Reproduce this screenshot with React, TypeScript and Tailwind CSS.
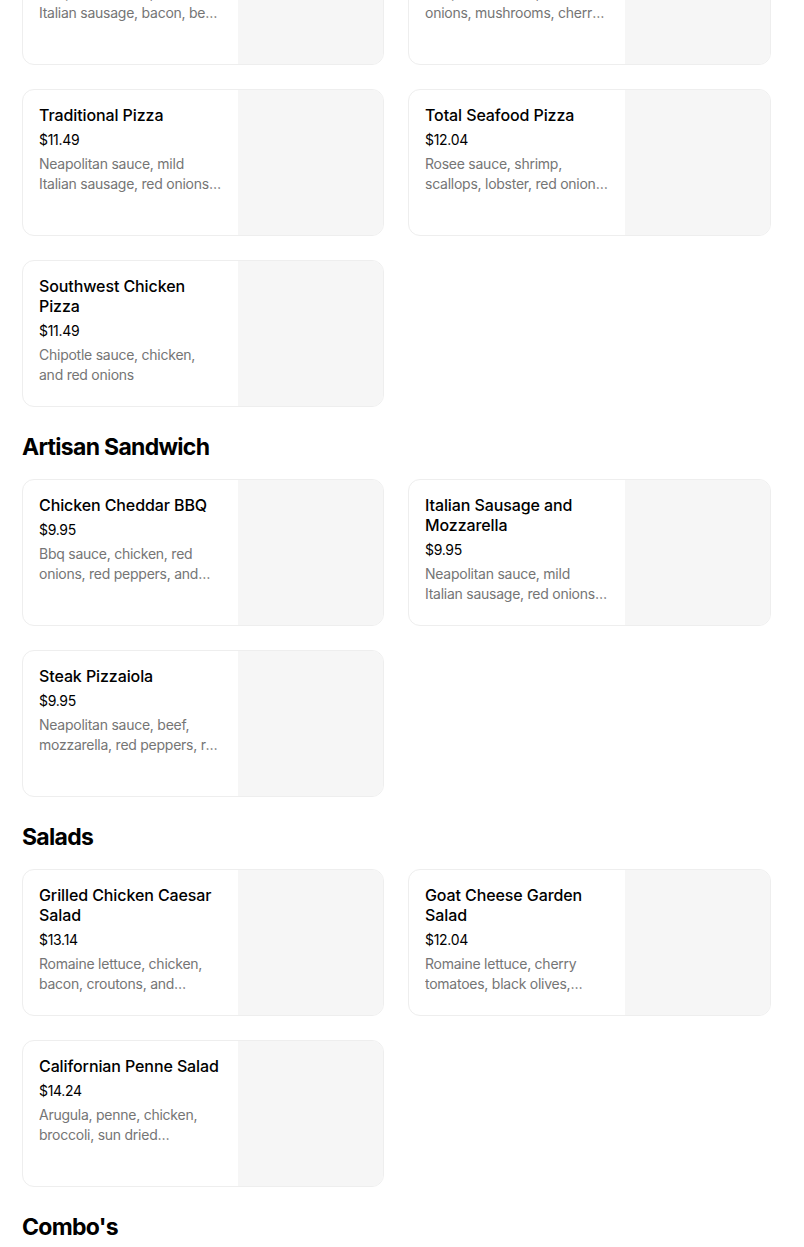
type Item = { name: string; price: string; desc: string };

const sections: { title?: string; items: Item[] }[] = [
  {
    items: [
      {
        name: "Meat Lovers Pizza",
        price: "$12.04",
        desc: "Neapolitan sauce, mild Italian sausage, bacon, beef, pepperoni, and mozzarella",
      },
      {
        name: "Vegetarian Pizza",
        price: "$11.49",
        desc: "Neapolitan sauce, red onions, mushrooms, cherry tomatoes, and olives",
      },
      {
        name: "Traditional Pizza",
        price: "$11.49",
        desc: "Neapolitan sauce, mild Italian sausage, red onions, mushrooms, and mozzarella",
      },
      {
        name: "Total Seafood Pizza",
        price: "$12.04",
        desc: "Rosee sauce, shrimp, scallops, lobster, red onions, and mozzarella",
      },
      {
        name: "Southwest Chicken Pizza",
        price: "$11.49",
        desc: "Chipotle sauce, chicken, and red onions",
      },
    ],
  },
  {
    title: "Artisan Sandwich",
    items: [
      {
        name: "Chicken Cheddar BBQ",
        price: "$9.95",
        desc: "Bbq sauce, chicken, red onions, red peppers, and cheddar cheese",
      },
      {
        name: "Italian Sausage and Mozzarella",
        price: "$9.95",
        desc: "Neapolitan sauce, mild Italian sausage, red onions, green peppers, and mozzarella",
      },
      {
        name: "Steak Pizzaiola",
        price: "$9.95",
        desc: "Neapolitan sauce, beef, mozzarella, red peppers, red onions, and mushrooms",
      },
    ],
  },
  {
    title: "Salads",
    items: [
      {
        name: "Grilled Chicken Caesar Salad",
        price: "$13.14",
        desc: "Romaine lettuce, chicken, bacon, croutons, and parmesan cheese",
      },
      {
        name: "Goat Cheese Garden Salad",
        price: "$12.04",
        desc: "Romaine lettuce, cherry tomatoes, black olives, cucumbers, and goat cheese",
      },
      {
        name: "Californian Penne Salad",
        price: "$14.24",
        desc: "Arugula, penne, chicken, broccoli, sun dried tomatoes, and pesto",
      },
    ],
  },
  { title: "Combo's", items: [] },
];

function MenuCard({ item }: { item: Item }) {
  return (
    <div className="flex h-[147px] overflow-hidden rounded-xl border border-[#eeeeee] bg-white">
      <div className="flex-1 min-w-0 px-4 pt-[15px]">
        <div className="text-[16px] font-medium leading-5 tracking-[-0.1px] text-black">
          {item.name}
        </div>
        <div className="mt-[5px] text-[14px] leading-5 tracking-[-0.3px] text-black">
          {item.price}
        </div>
        <div className="mt-1 line-clamp-2 text-[14px] leading-5 tracking-[-0.25px] text-[#757575]">
          {item.desc}
        </div>
      </div>
      <div className="w-[145px] shrink-0 bg-[#f6f6f6]" />
    </div>
  );
}

export default function App() {
  return (
    <div
      className="min-h-screen overflow-hidden bg-white"
      style={{ fontFamily: "Inter, 'Noto Sans', sans-serif" }}
    >
      <div className="-mt-[82px] pl-[22px]">
        {sections.map((s, i) => (
          <div key={i}>
            {s.title && (
              <h2 className="mt-6 mb-4 text-[23px] font-bold leading-8 tracking-[-0.7px] text-black">
                {s.title}
              </h2>
            )}
            {s.items.length > 0 && (
              <div className="grid grid-cols-[362px_363px] gap-6">
                {s.items.map((item) => (
                  <MenuCard key={item.name} item={item} />
                ))}
              </div>
            )}
          </div>
        ))}
      </div>
    </div>
  );
}
